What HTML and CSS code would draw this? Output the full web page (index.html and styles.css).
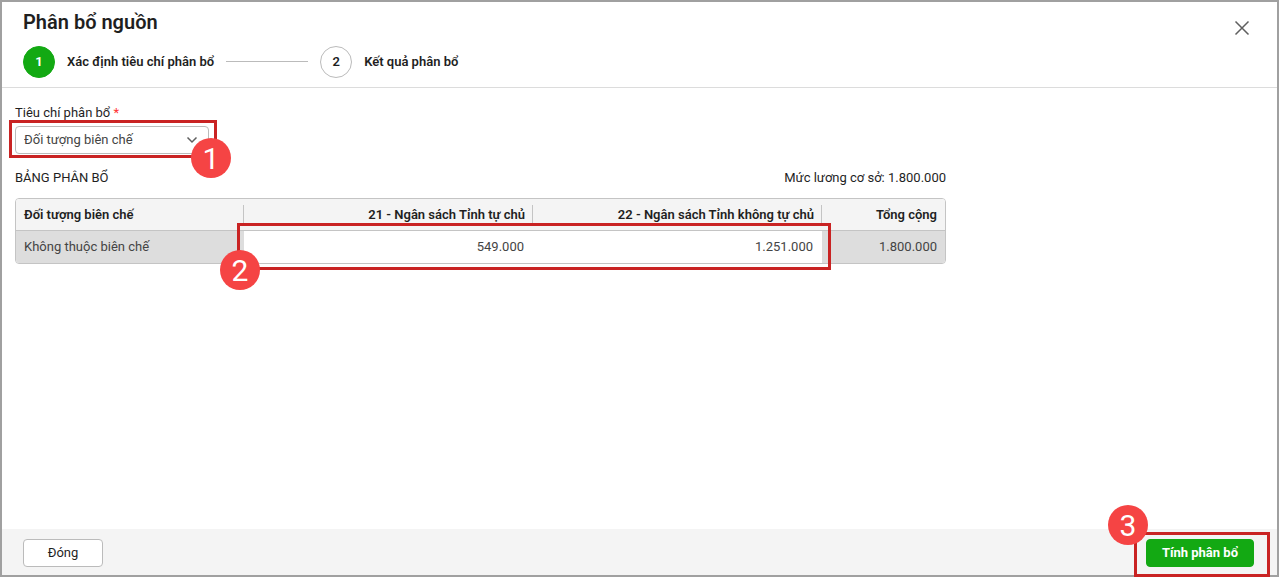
FILE: index.html
```html
<!DOCTYPE html>
<html lang="vi">
	<head>
		<meta charset="utf-8">
		<title>Phân bổ nguồn</title>
		<link rel="stylesheet" href="styles.css">
	</head>
	<body>
		<div class="dialog">
			<header class="header">
				<div class="title-row">
					<h1>Phân bổ nguồn</h1>
					<button class="close" type="button" aria-label="Đóng cửa sổ">
						<svg width="16" height="16" viewBox="0 0 16 16"><path d="M1.500 1.500L14.500 14.500M14.500 1.500L1.500 14.500"/></svg>
					</button>
				</div>
				<ol class="steps">
					<li class="step active"><span class="num">1</span>Xác định tiêu chí phân bổ</li>
					<li class="line"></li>
					<li class="step"><span class="num">2</span>Kết quả phân bổ</li>
				</ol>
			</header>

			<main class="content">
				<label class="label" for="criteria">Tiêu chí phân bổ <span class="req">*</span></label>
				<div class="select-box">
					<select id="criteria">
						<option>Đối tượng biên chế</option>
					</select>
					<svg class="arrow" width="12" height="8" viewBox="0 0 12 8"><path d="M1.500 1.500L6 6L10.500 1.500"/></svg>
					<div class="mark mark-select"><span class="badge">1</span></div>
				</div>

				<div class="table-area">
					<div class="caption">
						<span>BẢNG PHÂN BỔ</span>
						<span>Mức lương cơ sở: 1.800.000</span>
					</div>
					<div class="table-box">
						<table>
							<colgroup>
								<col class="c-name">
								<col class="c-source">
								<col class="c-source">
								<col class="c-total">
							</colgroup>
							<thead>
								<tr>
									<th>Đối tượng biên chế</th>
									<th id="s21">21 - Ngân sách Tỉnh tự chủ</th>
									<th id="s22">22 - Ngân sách Tỉnh không tự chủ</th>
									<th>Tổng cộng</th>
								</tr>
							</thead>
							<tbody>
								<tr>
									<td>Không thuộc biên chế</td>
									<td class="edit"><input type="text" value="549.000" aria-labelledby="s21"></td>
									<td class="edit"><input type="text" value="1.251.000" aria-labelledby="s22"></td>
									<td>1.800.000</td>
								</tr>
							</tbody>
						</table>
						<div class="mark mark-table"><span class="badge">2</span></div>
					</div>
				</div>
			</main>

			<footer class="footer">
				<button class="btn" type="button">Đóng</button>
				<div class="submit-box">
					<button class="btn primary" type="button">Tính phân bổ</button>
					<div class="mark mark-submit"><span class="badge">3</span></div>
				</div>
			</footer>
		</div>
	</body>
</html>
```
FILE: styles.css
```css
* {
	box-sizing: border-box;
}
body {
	margin: 0;
	font: 13px/16px Roboto, "Noto Sans", sans-serif;
	color: #1f1f1f;
}
button, input, select {
	font: inherit;
	color: inherit;
}
.dialog {
	display: flex;
	flex-direction: column;
	min-height: 100vh;
	border: 2px solid #a0a0a0;
	background: #fff;
}

/* header */
.header {
	padding: 8px 26px 9px 21px;
	border-bottom: 1px solid #dcdcdc;
}
.title-row {
	display: flex;
	justify-content: space-between;
	height: 36px;
}
h1 {
	margin: 0;
	font-size: 20px;
	line-height: 24px;
	font-weight: 600;
}
.close {
	width: 18px;
	height: 36px;
	padding: 0;
	border: 0;
	background: none;
	cursor: pointer;
}
.close svg {
	display: block;
	margin: auto;
}
svg {
	fill: none;
	stroke: #5f5f5f;
	stroke-width: 1.5;
}
.steps {
	display: flex;
	align-items: center;
	gap: 12px;
	margin: 0;
	padding: 0;
	list-style: none;
}
.step {
	display: flex;
	align-items: center;
	gap: 12px;
	font-weight: 600;
}
.num {
	display: flex;
	align-items: center;
	justify-content: center;
	width: 32px;
	height: 32px;
	border: 1px solid #bbb;
	border-radius: 50%;
}
.active .num {
	border-color: #13a913;
	background: #13a913;
	color: #fff;
	font-weight: 700;
}
.line {
	width: 82px;
	height: 2px;
	border-top: 1px solid #bbb;
}

/* content */
.content {
	flex: 1;
	padding: 17px 13px;
}
.label {
	display: block;
	margin-bottom: 5px;
}
.req {
	color: #f33;
}
.select-box {
	position: relative;
	width: 194px;
	height: 28px;
	margin-bottom: 16px;
}
select {
	width: 100%;
	height: 100%;
	padding: 0 8px;
	border: 1px solid #bbb;
	border-radius: 4px;
	background: #fff;
	color: #444;
	appearance: none;
}
.arrow {
	position: absolute;
	top: 10px;
	right: 11px;
	pointer-events: none;
}
.table-area {
	max-width: 931px;
}
.caption {
	display: flex;
	justify-content: space-between;
	margin-bottom: 12px;
}
.table-box {
	position: relative;
}
table {
	width: 100%;
	table-layout: fixed;
	border: 1px solid #c4c4c4;
	border-radius: 4px;
	border-spacing: 0;
	overflow: hidden;
}
.c-name {
	width: 228px;
}
.c-source {
	width: 289px;
}
th, td {
	height: 32px;
	padding: 0 8px;
	text-align: right;
}
th:first-child, td:first-child {
	text-align: left;
}
th {
	border-bottom: 1px solid #c4c4c4;
	background: linear-gradient(#c4c4c4, #c4c4c4) right center / 1px 20px no-repeat #f4f4f4;
	font-weight: 600;
}
th:last-child {
	background: #f4f4f4;
}
td {
	background: #ddd;
	color: #444;
}
td.edit {
	padding: 0;
	background: #fff;
}
td input {
	display: block;
	width: 100%;
	height: 32px;
	padding: 0 9px 2px;
	border: 0;
	background: none;
	text-align: right;
}

/* footer */
.footer {
	display: flex;
	justify-content: space-between;
	padding: 10px 23px 8px 21px;
	background: #f4f4f4;
}
.btn {
	min-width: 80px;
	height: 28px;
	padding: 0 15px;
	border: 1px solid #bbb;
	border-radius: 4px;
	background: #fff;
	cursor: pointer;
}
.primary {
	min-width: 108px;
	border-color: #13a913;
	background: #13a913;
	color: #fff;
	font-weight: 700;
}
.submit-box {
	position: relative;
}

/* numbered marks */
.mark {
	position: absolute;
	border: 3px solid #c92323;
	pointer-events: none;
}
.mark-select {
	inset: -6px -8px -4px -6px;
}
.mark-table {
	top: 25px;
	bottom: -6px;
	left: 222px;
	width: 594px;
}
.mark-submit {
	inset: -7px -16px -10px -12px;
}
.badge {
	position: absolute;
	width: 40px;
	height: 40px;
	border-radius: 50%;
	background: #f54444;
	color: #fff;
	font-size: 30px;
	line-height: 42px;
	text-align: center;
}
.mark-select .badge {
	right: -17px;
	bottom: -23px;
}
.mark-table .badge {
	left: -20px;
	bottom: -23px;
}
.mark-submit .badge {
	left: -29px;
	top: -30px;
}
```
